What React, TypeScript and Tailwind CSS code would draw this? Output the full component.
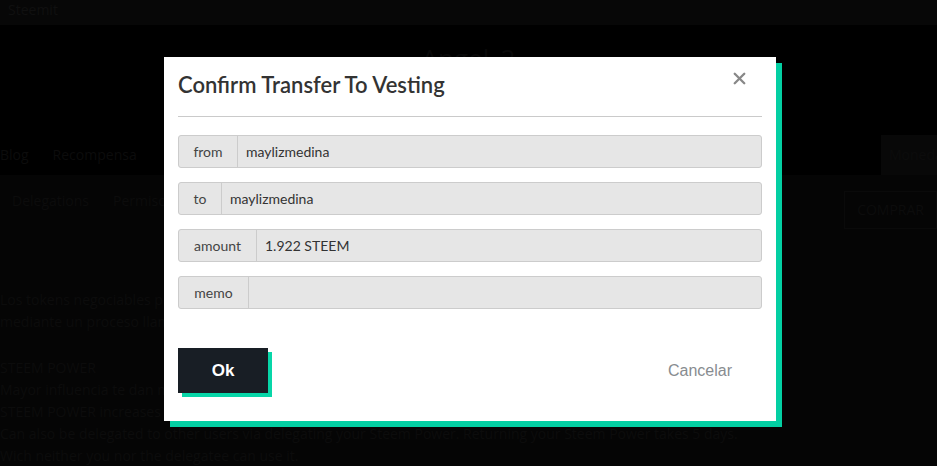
import { X } from 'lucide-react';

const fields = [
  { label: 'from', value: 'maylizmedina', w: 'w-[59px]' },
  { label: 'to', value: 'maylizmedina', w: 'w-[43px]' },
  { label: 'amount', value: '1.922 STEEM', w: 'w-[78px]' },
  { label: 'memo', value: '', w: 'w-[70px]' },
];

function BackgroundPage() {
  return (
    <div className="min-h-[466px] w-full bg-[#050505] text-[#0c0c0c] font-['Open_Sans',sans-serif]">
      <div className="h-[25px] bg-[#070707] px-2 text-sm text-[#101010]">Steemit</div>
      <div className="h-[110px] bg-black flex justify-center pt-[14px]">
        <span className="text-[26px] text-[#090909]">Angel_2</span>
      </div>
      <div className="h-[40px] bg-black flex items-center justify-between">
        <div className="flex gap-6 text-sm">
          <span>Blog</span>
          <span>Recompensa</span>
        </div>
        <div className="h-[40px] w-[56px] bg-[#080808] text-sm flex items-center px-2 overflow-hidden">Moneda</div>
      </div>
      <div className="flex justify-between pt-4">
        <div className="flex gap-6 pl-3 text-sm">
          <span>Delegations</span>
          <span>Permisos</span>
        </div>
        <div className="border border-[#0a0a0a] px-3 py-2 text-sm">COMPRAR</div>
      </div>
      <div className="pt-[60px] text-sm leading-[22px]">
        <p>Los tokens negociables pueden ser convertidos a STEEM POWER</p>
        <p>mediante un proceso llamado power up.</p>
        <p className="pt-6">STEEM POWER</p>
        <p>Mayor influencia te dan más control sobre los pagos de posts</p>
        <p>STEEM POWER increases at an APR of approximately 3%</p>
        <p>Can also be delegated to other users via delegating your Steem Power. Returning your Steem Power takes 5 days.</p>
        <p>Wich neither you nor the delegatee can use it.</p>
      </div>
    </div>
  );
}

export default function App() {
  return (
    <div className="relative w-[937px] h-[466px] overflow-hidden">
      <BackgroundPage />

      {/* Modal overlay */}
      <div className="absolute inset-0 pt-[57px] pl-[164px]">
        <div className="w-[612px] bg-white shadow-[6px_6px_0_#03cfa3] px-[14px] pt-[12px] pb-[28px] font-['Lato',sans-serif]">
          <div className="flex items-start justify-between">
            <h2 className="text-[22px] leading-[32px] font-semibold text-[#333]">
              Confirm Transfer To Vesting
            </h2>
            <button className="mt-[0px] mr-[13px] text-[#888]" aria-label="Close">
              <X className="w-[19px] h-[19px]" strokeWidth={3} />
            </button>
          </div>

          <div className="mt-[15px] h-px bg-[#cacaca]" />

          <div className="mt-[18px] flex flex-col gap-[14px]">
            {fields.map(f => (
              <div
                key={f.label}
                className="flex h-[33px] rounded-[3px] border border-[#cccccc] bg-[#e6e6e6] text-[14px] text-[#333]"
              >
                <div className={`${f.w} shrink-0 flex items-center justify-center border-r border-[#cccccc] text-[#444]`}>
                  {f.label}
                </div>
                <div className="flex-1 flex items-center px-[8px]">{f.value}</div>
              </div>
            ))}
          </div>

          <div className="mt-[39px] flex items-center justify-between">
            <button className="w-[90px] h-[45px] bg-[#181e25] text-white font-bold text-[17px] shadow-[4px_4px_0_#07d6a8] font-['Liberation_Sans',sans-serif]">
              Ok
            </button>
            <span className="mr-[30px] text-[16px] text-[#888c90] font-['Liberation_Sans',sans-serif]">
              Cancelar
            </span>
          </div>
        </div>
      </div>
    </div>
  );
}
